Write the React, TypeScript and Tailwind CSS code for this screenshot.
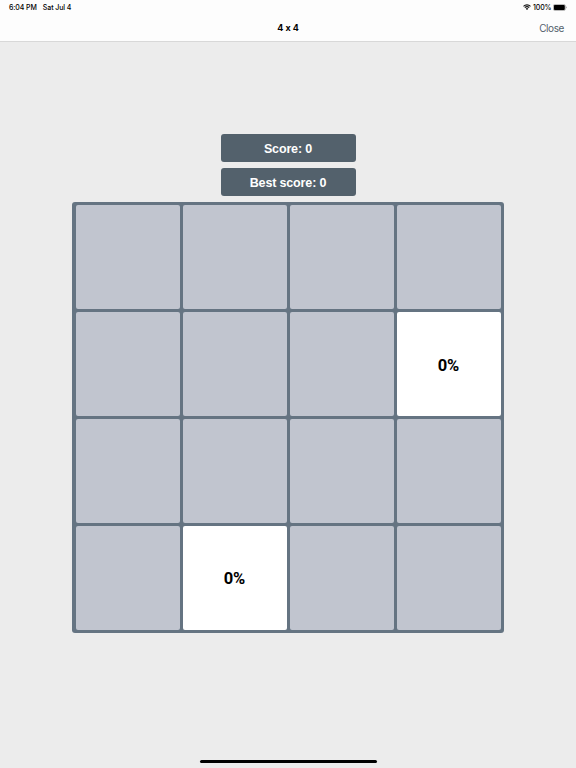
import React from "react";

interface Tile {
  row: number;
  col: number;
  label: string;
}

const SIZE = 4;

const tiles: Tile[] = [
  { row: 1, col: 3, label: "0%" },
  { row: 3, col: 1, label: "0%" },
];

function StatusBar() {
  return (
    <div className="flex h-[14px] items-center justify-between pr-[9px] pl-[9px] text-[7px] leading-none font-medium tracking-[-0.08px] text-black">
      <div className="flex gap-[6px]">
        <span>6:04 PM</span>
        <span>Sat Jul 4</span>
      </div>
      <div className="flex items-center">
        <svg width="8" height="6" viewBox="0 0 16 12" fill="none" stroke="#111" strokeWidth="2.1">
          <path d="M1 4.6a10 10 0 0 1 14 0" />
          <path d="M3.6 7.4a6.3 6.3 0 0 1 8.8 0" />
          <path d="M8 12 5.4 9.3a3.8 3.8 0 0 1 5.2 0z" fill="#111" stroke="none" />
        </svg>
        <span className="ml-[2px]">100%</span>
        <svg className="ml-[1.5px]" width="14" height="7" viewBox="0 0 14 7">
          <rect x="0.25" y="0.5" width="12.2" height="6" rx="1.6" fill="none" stroke="#777" strokeWidth="0.5" />
          <rect x="0.9" y="1.1" width="10.9" height="4.8" rx="1" fill="#000" />
          <path d="M13 2.6c.8.3.8 1.5 0 1.8z" fill="#777" />
        </svg>
      </div>
    </div>
  );
}

function ScoreBox({ label, value }: { label: string; value: number }) {
  return (
    <div className="flex h-7 w-[135px] items-center justify-center rounded-[3px] bg-[#53616c] pt-[3px] font-['Liberation_Sans',sans-serif] text-[12.5px] leading-none font-bold tracking-[-0.15px] text-white">
      {label}: {value}
    </div>
  );
}

function Board() {
  return (
    <div className="grid h-[431px] w-[432px] grid-cols-4 grid-rows-4 gap-[3px] rounded-[3px] bg-[#657482] p-[3.5px] pt-[3px]">
      {Array.from({ length: SIZE * SIZE }, (_, i) => {
        const tile = tiles.find((t) => t.row * SIZE + t.col === i);
        return (
          <div
            key={i}
            className={`flex items-center justify-center rounded-[2px] pt-[4px] font-['Roboto',sans-serif] text-[16.5px] leading-none font-bold text-black ${
              tile ? "bg-white" : "bg-[#c1c5cf]"
            }`}
          >
            {tile?.label}
          </div>
        );
      })}
    </div>
  );
}

export default function App() {
  return (
    <div className="flex h-[768px] w-[576px] flex-col overflow-hidden bg-[#ececec] font-['Inter',sans-serif]">
      <header className="h-[42px] shrink-0 border-b border-[#d8d8d8] bg-[#fdfdfd]">
        <StatusBar />
        <div className="grid h-7 grid-cols-3 items-center px-3">
          <span className="col-start-2 pb-px text-center text-[9px] leading-none font-bold text-black [font-feature-settings:'calt'_0]">
            4 x 4
          </span>
          <button className="pb-px text-right text-[10px] leading-none tracking-[-0.4px] text-[#53616c]">Close</button>
        </div>
      </header>

      <main className="flex flex-1 flex-col items-center pt-[92px]">
        <div className="flex flex-col gap-[6px]">
          <ScoreBox label="Score" value={0} />
          <ScoreBox label="Best score" value={0} />
        </div>
        <div className="mt-[6px]">
          <Board />
        </div>
      </main>

      {/* Home indicator */}
      <div className="mb-[5px] h-[3px] w-[177px] shrink-0 self-center rounded-full bg-black" />
    </div>
  );
}
